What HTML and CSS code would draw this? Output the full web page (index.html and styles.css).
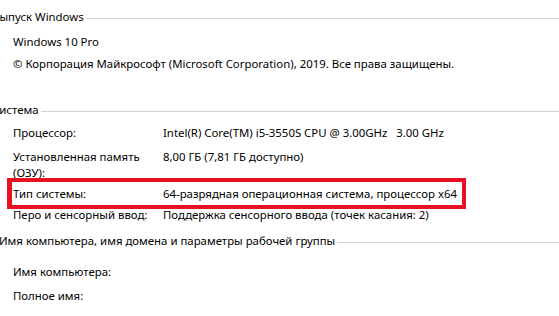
FILE: index.html
```html
<!DOCTYPE html>
<html lang="ru">
<head>
<meta charset="utf-8">
<link rel="stylesheet" href="styles.css">
</head>
<body>
<div class="page">
  <section class="group g1">
    <div class="heading h1"><span>Выпуск Windows</span></div>
    <div class="rows">
      <div class="row single">Windows 10 Pro</div>
      <div class="row single">© Корпорация Майкрософт (Microsoft Corporation), 2019. Все права защищены.</div>
    </div>
  </section>
  <section class="group g2">
    <div class="heading h2"><span>Система</span></div>
    <div class="rows">
      <div class="row"><div class="label">Процессор:</div><div class="value">Intel(R) Core(TM) i5-3550S CPU @ 3.00GHz&nbsp;&nbsp; 3.00 GHz</div></div>
      <div class="row mem"><div class="label">Установленная память (ОЗУ):</div><div class="value">8,00 ГБ (7,81 ГБ доступно)</div></div>
      <div class="row marked"><div class="label">Тип системы:</div><div class="value">64-разрядная операционная система, процессор x64</div></div>
      <div class="row"><div class="label">Перо и сенсорный ввод:</div><div class="value">Поддержка сенсорного ввода (точек касания: 2)</div></div>
    </div>
  </section>
  <section class="group g3">
    <div class="heading h3"><span>Имя компьютера, имя домена и параметры рабочей группы</span></div>
    <div class="rows">
      <div class="row"><div class="label">Имя компьютера:</div><div class="value"></div></div>
      <div class="row"><div class="label">Полное имя:</div><div class="value"></div></div>
      <div class="row"><div class="label">Описание:</div><div class="value"></div></div>
    </div>
  </section>
</div>
</body>
</html>
```
FILE: styles.css
```css
html, body {
  margin: 0;
  padding: 0;
  background: #ffffff;
  overflow: hidden;
}
body {
  width: 559px;
  height: 316px;
  font-family: "Noto Sans", "Open Sans", sans-serif;
  font-size: 11.4px;
  line-height: 16px;
  color: #000000;
}
.page {
  display: flex;
  flex-direction: column;
  padding-top: 9px;
}
.heading {
  display: flex;
  align-items: center;
  white-space: nowrap;
}
.heading::after {
  content: "";
  flex: 1;
  height: 1px;
  background: #d4d4d4;
  margin-left: 2px;
  margin-top: 2px;
}
.h1 { margin-left: -8px; }
.h2 { margin-left: -8px; }
.h3 { margin-left: -1px; }
.rows {
  display: flex;
  flex-direction: column;
  padding-left: 13px;
}
.g1 .rows { padding-top: 9px; gap: 6px; }
.g2 { margin-top: 30px; }
.g2 .rows { padding-top: 7px; gap: 5px; }
.g2 .mem { margin-top: 3px; }
.g3 { margin-top: 10px; }
.g3 .rows { padding-top: 15px; gap: 8px; }
.row {
  display: grid;
  grid-template-columns: 150px auto;
  position: relative;
  white-space: nowrap;
}
.row.single { display: block; }
.label { white-space: normal; width: 146px; }
.marked::after {
  content: "";
  position: absolute;
  left: -6px;
  top: -8px;
  width: 450px;
  height: 23px;
  border: 4px solid #e81123;
  border-left-width: 5px;
  pointer-events: none;
}
```
